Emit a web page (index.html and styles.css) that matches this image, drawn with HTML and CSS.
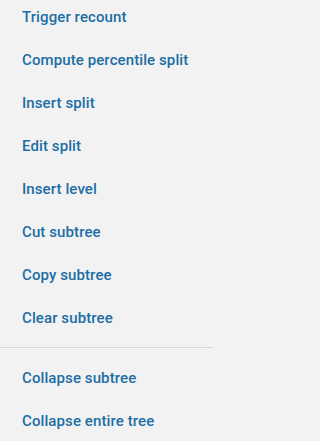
FILE: index.html
```html
<!DOCTYPE html>
<html>
<head>
<meta charset="utf-8">
<link rel="stylesheet" href="styles.css">
</head>
<body>
<div class="menu">
  <div class="item">Trigger recount</div>
  <div class="item">Compute percentile split</div>
  <div class="item">Insert split</div>
  <div class="item">Edit split</div>
  <div class="item">Insert level</div>
  <div class="item">Cut subtree</div>
  <div class="item">Copy subtree</div>
  <div class="item">Clear subtree</div>
  <div class="divider"></div>
  <div class="item">Collapse subtree</div>
  <div class="item">Collapse entire tree</div>
</div>
</body>
</html>
```
FILE: styles.css
```css
html, body {
  margin: 0;
  padding: 0;
  background: #f2f2f2;
}
body {
  width: 213px;
  height: 441px;
  overflow: hidden;
}
.menu {
  margin-top: -5px;
  display: flex;
  flex-direction: column;
}
.item {
  height: 43px;
  display: flex;
  align-items: center;
  padding: 0 22px;
  font-family: Roboto, "Liberation Sans", sans-serif;
  font-weight: 500;
  font-size: 15px;
  line-height: 18px;
  letter-spacing: 0.1px;
  color: #1d6ea5;
  white-space: nowrap;
}
.divider {
  height: 1px;
  background: #d6d6d6;
  margin: 8px 0;
}
```
